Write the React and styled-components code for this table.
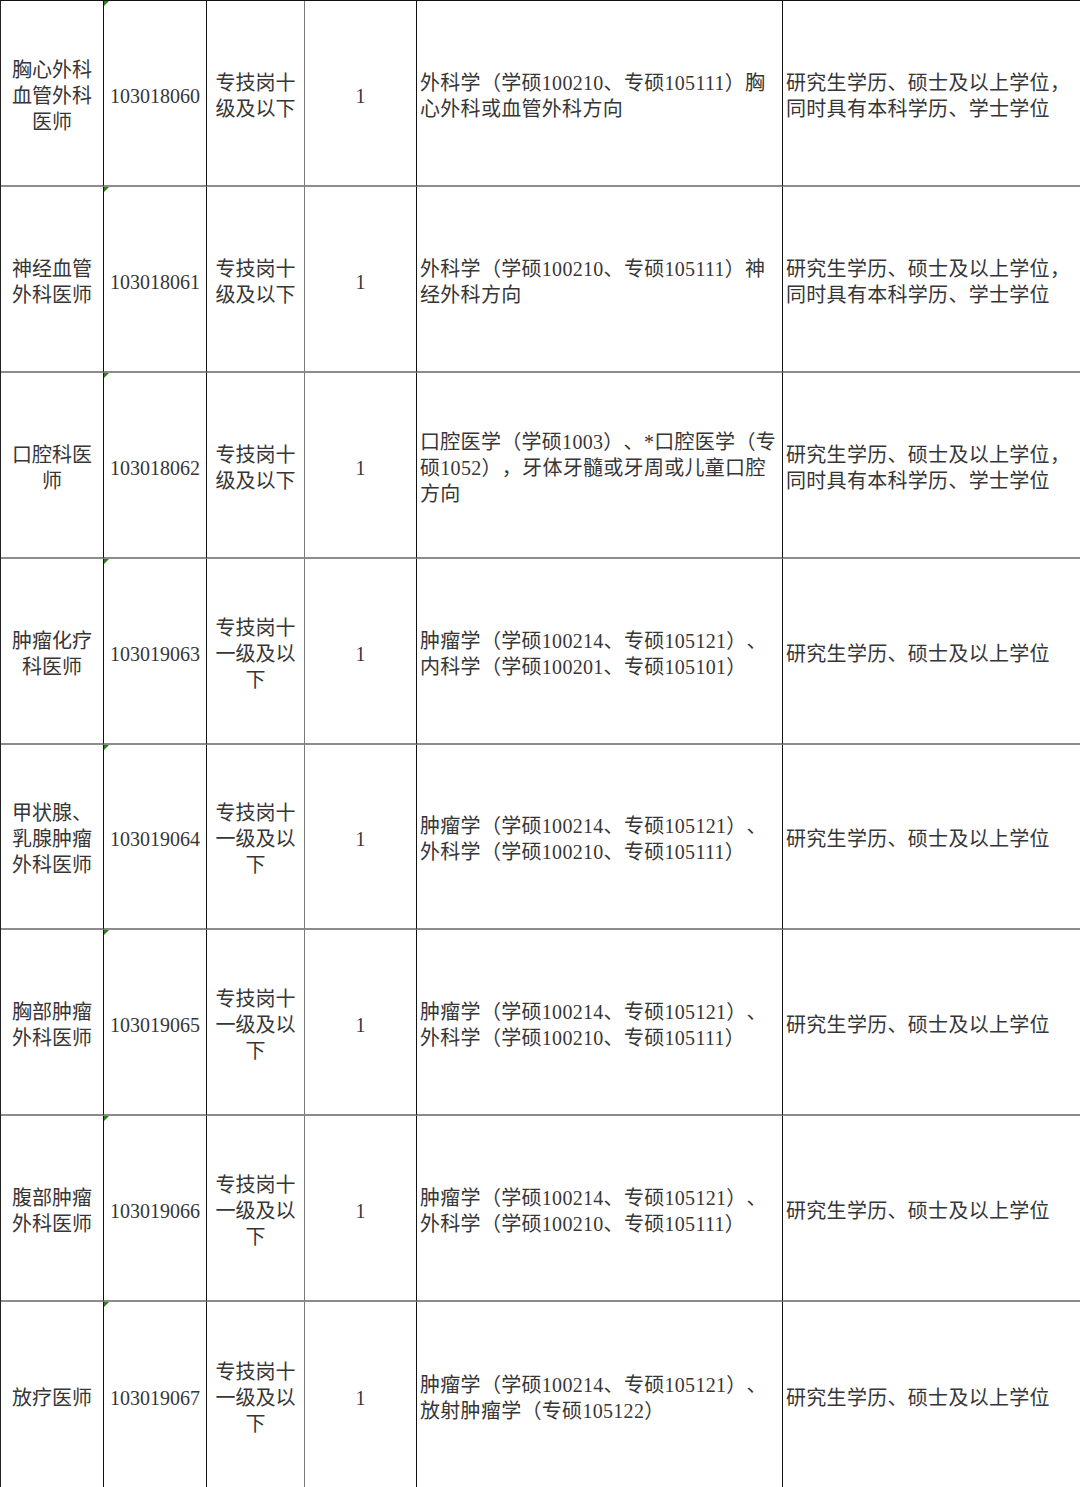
import React from "react";
import styled, { createGlobalStyle } from "styled-components";

const Global = createGlobalStyle`
  html, body { margin: 0; padding: 0; background: #fff; }
  body { font-family: "Liberation Serif", "Noto Sans CJK SC", serif; }
`;

const Table = styled.div`
  display: grid;
  grid-template-columns: 103px 103px 98px 112px 366px 298px;
  grid-auto-rows: 185.875px;
  width: 1080px;
  border-top: 1px solid #111;
  border-left: 1px solid #222;
  box-sizing: border-box;
  background: #fff;
`;

const Cell = styled.div`
  position: relative;
  box-sizing: border-box;
  display: flex;
  align-items: center;
  justify-content: ${(p) => (p.$align === "left" ? "flex-start" : "center")};
  text-align: ${(p) => (p.$align === "left" ? "left" : "center")};
  padding: ${(p) => (p.$align === "left" ? "6px 4px 0 3px" : "6px 2px 0")};
  letter-spacing: ${(p) => (p.$align === "left" ? "0.3px" : "0")};
  border-right: 1.5px solid ${(p) => (p.$soft ? "#7a7a7a" : "#111")};
  border-bottom: ${(p) => (p.$last ? "1.5px solid #111" : "2px solid #8c8c8c")};
  color: #363636;
  font-size: 20px;
  line-height: 26px;
  font-family: "Liberation Serif", "Noto Sans CJK SC", serif;
  white-space: nowrap;
  text-spacing-trim: space-all;
`;

const Flag = styled.span`
  position: absolute;
  top: 0;
  left: 0;
  width: 0;
  height: 0;
  border-top: 5px solid #2e7d1e;
  border-right: 5px solid transparent;
`;

const Lines = ({ lines }) =>
  lines.map((l, i) => (
    <React.Fragment key={i}>
      {i > 0 && <br />}
      {l}
    </React.Fragment>
  ));

const TEN = ["专技岗十", "级及以下"];
const ELEVEN = ["专技岗十", "一级及以", "下"];
const EDU1 = ["研究生学历、硕士及以上学位，", "同时具有本科学历、学士学位"];
const EDU2 = ["研究生学历、硕士及以上学位"];

const rows = [
  {
    name: ["胸心外科", "血管外科", "医师"],
    code: "103018060",
    level: TEN,
    major: ["外科学（学硕100210、专硕105111）胸", "心外科或血管外科方向"],
    edu: EDU1,
  },
  {
    name: ["神经血管", "外科医师"],
    code: "103018061",
    level: TEN,
    major: ["外科学（学硕100210、专硕105111）神", "经外科方向"],
    edu: EDU1,
  },
  {
    name: ["口腔科医", "师"],
    code: "103018062",
    level: TEN,
    major: [
      "口腔医学（学硕1003）、*口腔医学（专",
      "硕1052），牙体牙髓或牙周或儿童口腔",
      "方向",
    ],
    edu: EDU1,
  },
  {
    name: ["肿瘤化疗", "科医师"],
    code: "103019063",
    level: ELEVEN,
    major: ["肿瘤学（学硕100214、专硕105121）、", "内科学（学硕100201、专硕105101）"],
    edu: EDU2,
  },
  {
    name: ["甲状腺、", "乳腺肿瘤", "外科医师"],
    code: "103019064",
    level: ELEVEN,
    major: ["肿瘤学（学硕100214、专硕105121）、", "外科学（学硕100210、专硕105111）"],
    edu: EDU2,
  },
  {
    name: ["胸部肿瘤", "外科医师"],
    code: "103019065",
    level: ELEVEN,
    major: ["肿瘤学（学硕100214、专硕105121）、", "外科学（学硕100210、专硕105111）"],
    edu: EDU2,
  },
  {
    name: ["腹部肿瘤", "外科医师"],
    code: "103019066",
    level: ELEVEN,
    major: ["肿瘤学（学硕100214、专硕105121）、", "外科学（学硕100210、专硕105111）"],
    edu: EDU2,
  },
  {
    name: ["放疗医师"],
    code: "103019067",
    level: ELEVEN,
    major: ["肿瘤学（学硕100214、专硕105121）、", "放射肿瘤学（专硕105122）"],
    edu: EDU2,
  },
];

export default function App() {
  return (
    <>
      <Global />
      <Table>
        {rows.map((r, i) => {
          const last = i === rows.length - 1;
          return (
            <React.Fragment key={r.code}>
              <Cell $last={last}>
                <div><Lines lines={r.name} /></div>
              </Cell>
              <Cell $last={last}>
                <Flag />
                {r.code}
              </Cell>
              <Cell $last={last} $soft>
                <div><Lines lines={r.level} /></div>
              </Cell>
              <Cell $last={last}>1</Cell>
              <Cell $last={last} $align="left">
                <div><Lines lines={r.major} /></div>
              </Cell>
              <Cell $last={last} $align="left">
                <div><Lines lines={r.edu} /></div>
              </Cell>
            </React.Fragment>
          );
        })}
      </Table>
    </>
  );
}
